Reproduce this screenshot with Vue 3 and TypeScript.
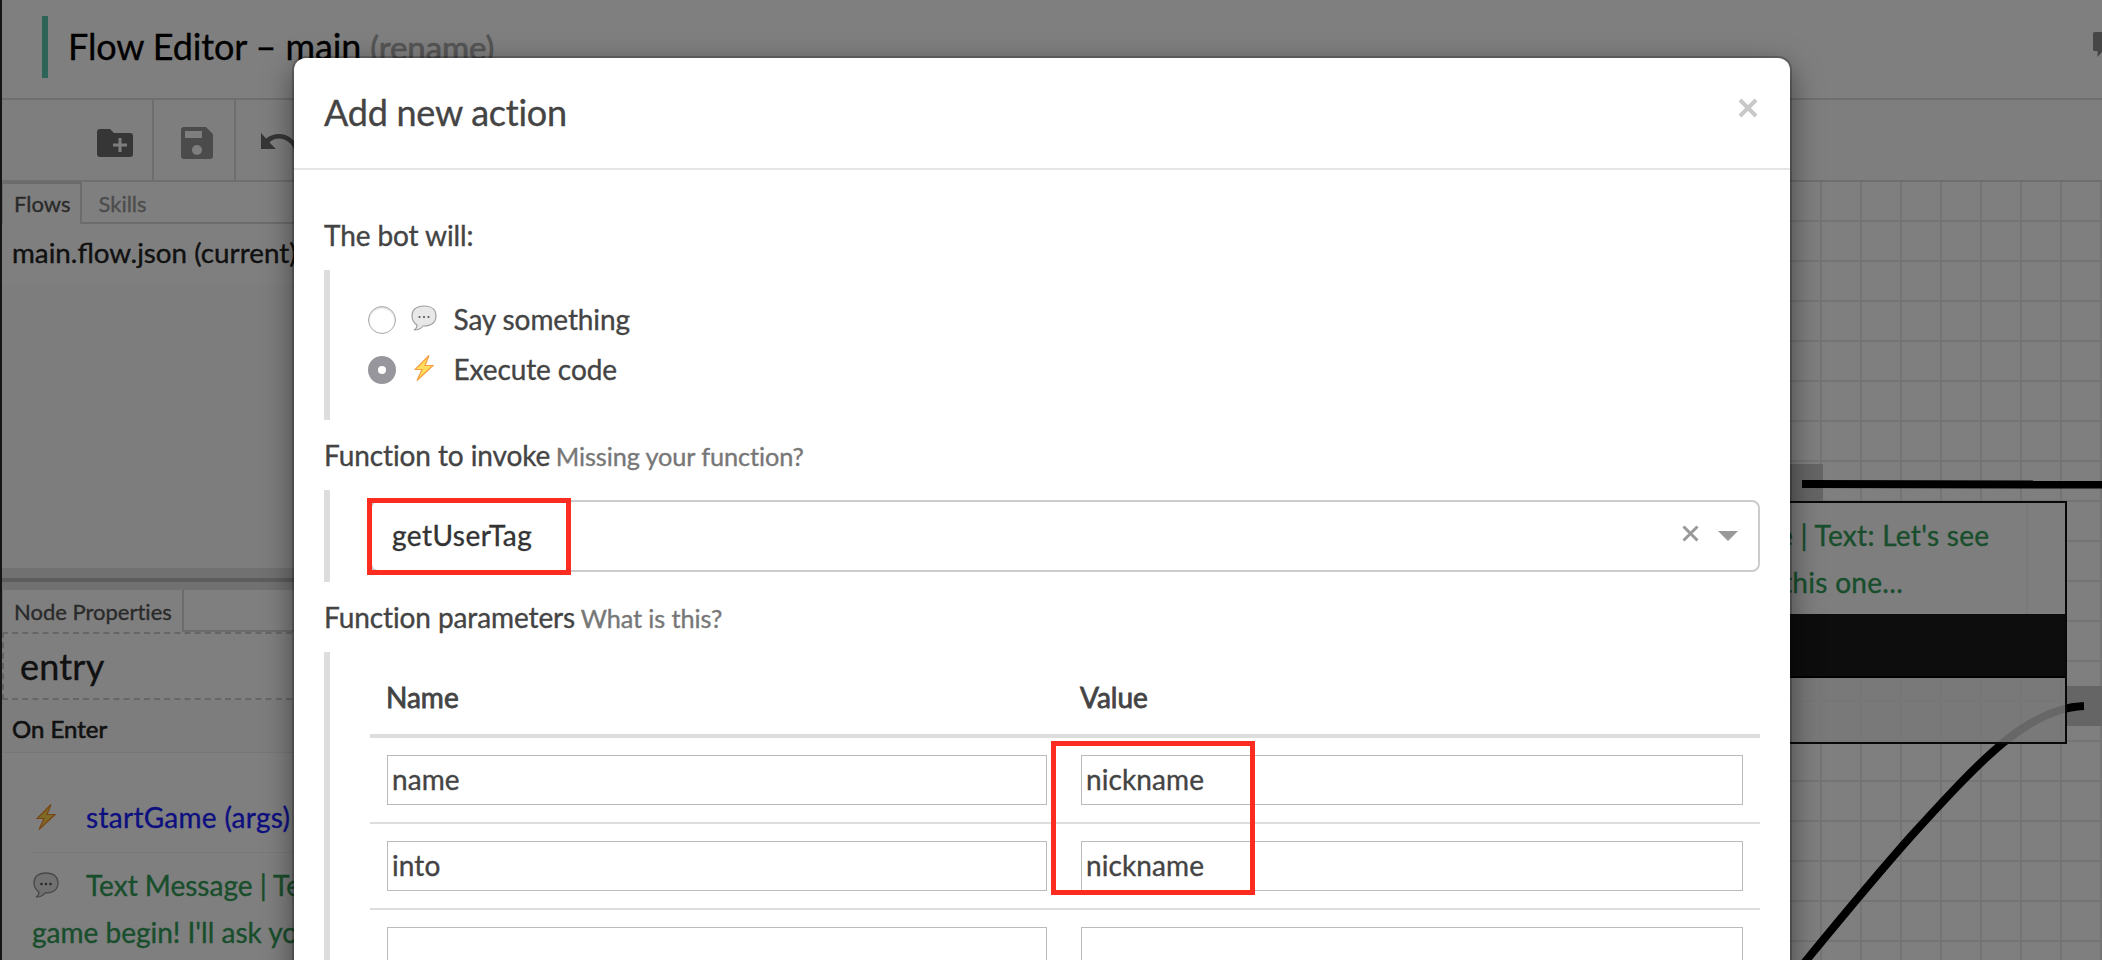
<script setup lang="ts">
interface Param {
  name: string
  value: string
}

const params: Param[] = [
  { name: 'name', value: 'nickname' },
  { name: 'into', value: 'nickname' },
  { name: '', value: '' },
]
</script>

<template>
  <div class="app">
    <div class="editor">
      <header class="top">
        <h1 class="title">Flow Editor – main <span class="rename">(rename)</span></h1>
        <svg class="chat" viewBox="0 0 24 25"><path d="M1.500 0h21a1.500 1.500 0 0 1 1.500 1.500v16a1.500 1.500 0 0 1-1.500 1.500H10l-5.500 6v-6h-3a1.500 1.500 0 0 1-1.500-1.500v-16a1.500 1.500 0 0 1 1.500-1.500z" fill="#8c8c8c" /></svg>
      </header>
      <nav class="toolbar">
        <div class="tool first">
          <svg viewBox="0 0 36 28" width="36" height="28"><path fill="#6c6c6c" fill-rule="evenodd" d="M3 0h10l4 4h16a3 3 0 0 1 3 3v18a3 3 0 0 1-3 3H3a3 3 0 0 1-3-3V3a3 3 0 0 1 3-3zM21.500 9v5.500h-5.500v3h5.500v5.500h3v-5.500h5.500v-3h-5.500V9z" /></svg>
        </div>
        <div class="tool save">
          <svg viewBox="0 0 32 32" width="32" height="32"><path fill="#979797" fill-rule="evenodd" d="M3 0h22l7 7v22a3 3 0 0 1-3 3H3a3 3 0 0 1-3-3V3a3 3 0 0 1 3-3zM4 4v7h17V4zM16 18a5 5 0 1 0 0 10a5 5 0 1 0 0-10z" /></svg>
        </div>
        <div class="tool undo">
          <svg viewBox="0 0 40 18" width="40" height="18"><path fill="#6c6c6c" d="M0 0l5 5.500c4-3 8-4.500 13-4.500 9 0 16 6 19 14l-4 1.500c-2-6-8-11-15-11-4 0-7 1.500-9.500 4l6.500 6.500H0z" /></svg>
        </div>
      </nav>
      <div class="body">
        <aside class="side">
          <div class="tabs">
            <div class="tab active">Flows</div>
            <div class="tab">Skills</div>
          </div>
          <div class="flows">main.flow.json (current)</div>
          <div class="splitter"></div>
          <div class="tabs props">
            <div class="tab active">Node Properties</div>
          </div>
          <div class="node-name">entry</div>
          <div class="section">On Enter</div>
          <div class="actions">
            <div class="action code">
              <svg class="bolt" viewBox="0 0 20 26"><path d="M15 .5L1 14.500h7L3 25.500 19 10.500h-8z" fill="#ffd54a" stroke="#f08c2c" stroke-width="1.200" /></svg>
              <span>startGame (args)</span>
            </div>
            <div class="action say">
              <svg class="bubble" viewBox="0 0 26 26"><path d="M13 1C5 1 1 5 1 11c0 4 2 7 5 9 0 2-1 4-3 5 4 0 7-1 9-4 9 0 13-4 13-10S21 1 13 1z" fill="#e2e2e2" stroke="#909090" stroke-width="1.300" /><g fill="#444"><circle cx="8.500" cy="12" r="1.200" /><circle cx="13" cy="12" r="1.200" /><circle cx="17.500" cy="12" r="1.200" /></g></svg>
              <span>Text Message | Text:<br />game begin! I'll ask you</span>
            </div>
          </div>
        </aside>
        <main class="canvas">
          <svg class="links" viewBox="0 0 322 779" width="322" height="779">
            <rect x="0" y="282" width="43" height="37" fill="#cbcbcb" />
            <rect x="287" y="504" width="36" height="40" fill="#cbcbcb" />
            <path d="M22 302L322 302.500" stroke="#000" stroke-width="8" fill="none" />
            <path d="M304 524C250 526 205 573 133 652C100 689 70 725 20 786" stroke="#000" stroke-width="8" fill="none" />
          </svg>
          <div class="node">
            <div class="node-text"><p>e | Text: Let's see</p><p>this one...</p></div>
            <div class="node-dark"></div>
            <div class="node-foot"></div>
          </div>
        </main>
      </div>
    </div>
    <div class="backdrop"></div>
    <section class="modal">
      <header class="modal-head">
        <h2>Add new action</h2>
        <svg class="close" viewBox="0 0 20 20"><path d="M2 2L18 18M18 2L2 18" stroke="#c8c8c8" stroke-width="4" /></svg>
      </header>
      <div class="modal-body">
        <h3>The bot will:</h3>
        <div class="quote choices">
          <div class="choice">
            <i class="radio"></i>
            <svg class="bubble" viewBox="0 0 26 26"><path d="M13 1C5 1 1 5 1 11c0 4 2 7 5 9 0 2-1 4-3 5 4 0 7-1 9-4 9 0 13-4 13-10S21 1 13 1z" fill="#e8e8e8" stroke="#a0a0a0" stroke-width="1.200" /><g fill="#555"><circle cx="8.500" cy="12" r="1.100" /><circle cx="13" cy="12" r="1.100" /><circle cx="17.500" cy="12" r="1.100" /></g></svg>
            <span>Say something</span>
          </div>
          <div class="choice">
            <i class="radio on"></i>
            <svg class="bolt" viewBox="0 0 20 26"><path d="M15 .5L1 14.500h7L3 25.500 19 10.500h-8z" fill="#ffdc5c" stroke="#f5a042" stroke-width="1.200" /></svg>
            <span>Execute code</span>
          </div>
        </div>
        <h3>Function to invoke <small>Missing your function?</small></h3>
        <div class="quote pick">
          <div class="select">
            <span>getUserTag</span>
            <svg class="clear" viewBox="0 0 17 17"><path d="M1.500 1.500L15.500 15.500M15.500 1.500L1.500 15.500" stroke="#999" stroke-width="3" /></svg>
            <svg class="caret" viewBox="0 0 20 10"><path d="M0 0H20L10 10z" fill="#999" /></svg>
            <div class="mark mark-fn"></div>
          </div>
        </div>
        <h3>Function parameters <small>What is this?</small></h3>
        <div class="quote table">
          <div class="row head"><span>Name</span><span>Value</span></div>
          <div v-for="(p, i) in params" :key="i" class="row">
            <div class="field">{{ p.name }}</div>
            <div class="field">{{ p.value }}</div>
          </div>
          <div class="mark mark-values"></div>
        </div>
      </div>
    </section>
  </div>
</template>

<style>
html,
body {
  margin: 0;
  overflow: hidden;
}
</style>

<style scoped>
* {
  box-sizing: border-box;
}
.app {
  position: relative;
  width: 2102px;
  height: 960px;
  overflow: hidden;
  font-family: Lato, sans-serif;
  font-size: 28px;
  font-variant-ligatures: no-common-ligatures;
  -webkit-text-stroke: 0.35px currentColor;
  color: #444;
  background: #fff;
}
h1,
h2,
h3,
p {
  margin: 0;
  font-weight: 400;
}
.editor {
  height: 960px;
  display: flex;
  flex-direction: column;
  border-left: 2px solid #2a2a2a;
}
.top {
  height: 98px;
  flex: none;
  display: flex;
  justify-content: space-between;
  padding: 16px 0 0 40px;
  overflow: hidden;
}
.title {
  height: 62px;
  border-left: 6px solid #5cc6b0;
  padding-left: 20px;
  font-size: 36px;
  line-height: 60px;
  letter-spacing: -0.12px;
  color: #000;
  white-space: nowrap;
}
.rename {
  color: #aaa;
  font-size: 33px;
  letter-spacing: -0.1px;
  -webkit-text-stroke-width: 0.7px;
}
.chat {
  width: 24px;
  height: 25px;
  margin: 16px -15px 0 0;
}
.toolbar {
  height: 84px;
  flex: none;
  display: flex;
  background: #fcfcfc;
  border-top: 2px solid #ddd;
  border-bottom: 2px solid #ddd;
}
.tool {
  width: 82px;
  display: flex;
  align-items: center;
  justify-content: center;
  border-right: 2px solid #ddd;
  padding-top: 6px;
}
.tool.first {
  width: 152px;
  padding-left: 76px;
}
.tool.save {
  padding-left: 5px;
}
.tool.undo {
  width: 90px;
  padding: 4px 0 0 2px;
}
.body {
  flex: 1;
  display: flex;
}
.side {
  width: 300px;
  display: flex;
  flex-direction: column;
}
.tabs {
  height: 42px;
  display: flex;
  font-size: 22px;
  line-height: 43px;
  border-bottom: 2px solid #d8d8d8;
  color: #999;
}
.tab {
  padding: 0 16px;
}
.tab.active {
  height: 42px;
  padding: 0 10px 0 11px;
  color: #555;
  background: #fff;
  border: 2px solid #d8d8d8;
  border-left-width: 1px;
  border-bottom: 0;
  line-height: 39px;
}
.flows {
  height: 344px;
  padding: 5px 0 0 10px;
  font-size: 27.8px;
  line-height: 48px;
  font-variant-ligatures: normal;
  color: #222;
  background: linear-gradient(#fff 60px, #fbfbfb 60px);
  white-space: nowrap;
}
.splitter {
  height: 22px;
  border-top: 10px solid #e2e2e2;
  border-bottom: 8px solid #e2e2e2;
  background: #bbb;
}
.props .tab {
  border-top: 0;
  padding: 0 10px 0 11px;
  line-height: 43px;
}
.node-name {
  height: 68px;
  border: 2px dashed #ccc;
  padding-left: 16px;
  font-size: 36px;
  line-height: 64px;
  letter-spacing: 0.2px;
  color: #222;
}
.section {
  height: 53px;
  padding-left: 10px;
  font-size: 24px;
  line-height: 57px;
  color: #222;
  -webkit-text-stroke-width: 0.6px;
  background: #fafafa;
  border-bottom: 1px solid #eee;
}
.actions {
  flex: 1;
  padding: 35px 0 0 30px;
}
.action {
  line-height: 47px;
  white-space: nowrap;
}
.action.code {
  height: 65px;
  padding-top: 6px;
  display: flex;
  border-bottom: 1px solid #f2f2f2;
  letter-spacing: 0.28px;
  color: #1a1eff;
}
.action.code .bolt {
  margin: 10px 30px 0 4px;
}
.action.say {
  padding-top: 9px;
  line-height: 46.500px;
  color: #329c58;
}
.action.say .bubble {
  vertical-align: -2px;
  margin: 0 27px 0 1px;
}
.bolt {
  width: 20px;
  height: 26px;
  flex: none;
}
.bubble {
  width: 26px;
  height: 26px;
  flex: none;
}
.canvas {
  position: relative;
  flex: none;
  width: 322px;
  margin-left: 1478px;
  background-image: linear-gradient(90deg, transparent 38px, #e8e8e8 38px), linear-gradient(transparent 38px, #e8e8e8 38px);
  background-size: 40px 40px;
  background-position: 2px 0;
}
.links {
  position: absolute;
  left: 0;
  top: 0;
}
.node {
  position: absolute;
  left: -20px;
  top: 319px;
  width: 307px;
  height: 243px;
  border: 2px solid #111;
  background: rgba(240, 240, 240, 0.86);
}
.node-text {
  height: 111px;
  padding: 9px 0 0 16px;
  line-height: 47px;
  letter-spacing: 0.3px;
  color: #329c58;
  background: linear-gradient(90deg, #fdfdfd 264px, #f2f2f2 264px, #f2f2f2 266px, #fdfdfd 266px);
  white-space: nowrap;
}
.node-text p + p {
  padding-left: 4px;
}
.node-dark {
  height: 64px;
  background: #1a1a1a;
  border-bottom: 2px solid #000;
}
.node-foot {
  height: 64px;
}
.backdrop {
  position: absolute;
  inset: 0;
  background: rgba(0, 0, 0, 0.5);
}
.modal {
  position: absolute;
  left: 294px;
  top: 58px;
  width: 1496px;
  height: 960px;
  background: #fff;
  border-radius: 12px;
  box-shadow: 0 0 0 2px rgba(0, 0, 0, 0.2), 0 10px 30px rgba(0, 0, 0, 0.5);
}
.modal-head {
  height: 112px;
  display: flex;
  justify-content: space-between;
  padding: 0 32px 0 30px;
  border-bottom: 2px solid #e5e5e5;
}
h2 {
  font-size: 36px;
  line-height: 108px;
  letter-spacing: -0.25px;
}
.close {
  width: 20px;
  height: 20px;
  margin-top: 40px;
}
.modal-body {
  padding: 45px 30px 0;
}
h3 {
  height: 40px;
  font-size: 28px;
  line-height: 40px;
  letter-spacing: -0.1px;
  white-space: nowrap;
}
small {
  margin-left: -1.500px;
  font-size: 25.300px;
  color: #777;
}
.quote {
  border-left: 6px solid #ddd;
  padding-left: 40px;
}
.choices {
  height: 150px;
  margin: 15px 0 15px;
  padding: 25px 0 0 38px;
}
.choice {
  height: 50px;
  display: flex;
  align-items: center;
}
.choice span {
  margin-top: -2px;
  letter-spacing: -0.1px;
}
.choice .bubble {
  margin: -4px 16.500px 0 15px;
}
.choice .bolt {
  margin: -4px 19.500px 0 18px;
}
.radio {
  width: 28px;
  height: 28px;
  border-radius: 50%;
  border: 1px solid #aaa;
  background: #fff;
  box-shadow: inset 0 1px 2px rgba(0, 0, 0, 0.2);
}
.radio.on {
  border: 10px solid #96969c;
  box-shadow: none;
}
.pick {
  height: 92px;
  margin: 15px 0 15px;
  padding-top: 10px;
}
.select {
  position: relative;
  height: 72px;
  display: flex;
  align-items: center;
  border: 2px solid #ccc;
  border-radius: 8px;
  padding: 0 20px 0 20px;
  color: #333;
}
.select span {
  flex: 1;
  margin-top: -2px;
  letter-spacing: 0.5px;
}
.clear {
  width: 17px;
  height: 17px;
  margin: -5px 19px 0 0;
}
.caret {
  width: 20px;
  height: 10px;
}
.mark {
  position: absolute;
  border: 5px solid #fc2d20;
}
.mark-fn {
  left: -5px;
  top: -4px;
  width: 204px;
  height: 77px;
}
.mark-values {
  left: 721px;
  top: 89px;
  width: 204px;
  height: 154px;
}
.table {
  position: relative;
  margin-top: 15px;
  height: 400px;
}
.row {
  height: 86px;
  display: grid;
  grid-template-columns: 660px 662px;
  column-gap: 34px;
  padding: 17px 17px 0;
  border-bottom: 2px solid #ddd;
}
.row.head {
  padding: 25px 16px 0;
  line-height: 40px;
  border-bottom-width: 4px;
  -webkit-text-stroke-width: 0.8px;
}
.field {
  height: 50px;
  border: 1px solid #bbb;
  padding-left: 4px;
  line-height: 46px;
  letter-spacing: 0.1px;
}
</style>
